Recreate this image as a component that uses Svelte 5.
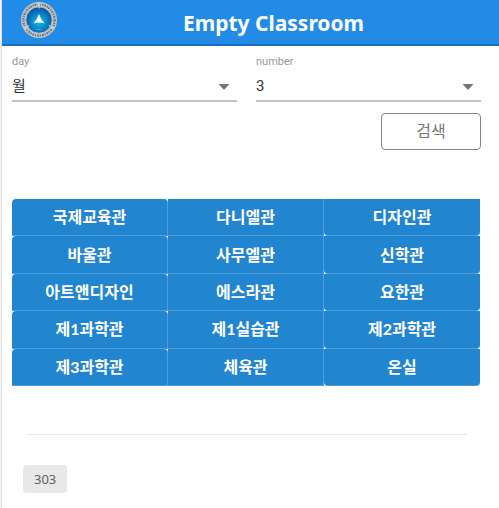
<script>
  let day = $state('월');
  let number = $state('3');
  const days = ['월', '화', '수', '목', '금'];
  const numbers = ['1', '2', '3', '4', '5', '6', '7', '8', '9'];
  const buildings = [
    '국제교육관', '다니엘관', '디자인관',
    '바울관', '사무엘관', '신학관',
    '아트앤디자인', '에스라관', '요한관',
    '제1과학관', '제1실습관', '제2과학관',
    '제3과학관', '체육관', '온실'
  ];
  const rooms = ['303'];
</script>

<div class="app">
  <header>
    <svg class="logo" viewBox="0 0 38 38" aria-hidden="true">
      <defs>
        <radialGradient id="core" cx="50%" cy="56%" r="52%">
          <stop offset="0" stop-color="#14bfe8" />
          <stop offset="0.4" stop-color="#0898d4" />
          <stop offset="1" stop-color="#0a55a4" />
        </radialGradient>
      </defs>
      <circle cx="19" cy="19" r="18" fill="#c4c6c4" />
      <circle cx="19" cy="19" r="15.6" fill="none" stroke="#5f7688" stroke-width="2.2" stroke-dasharray="1.7 1.1 1.2 0.9" />
      <circle cx="19" cy="19" r="13.2" fill="url(#core)" stroke="#c9ccca" stroke-width="0.8" />
      <path d="M17 1.5h4L19 8.5zM3.2 25.8l1.8 3.2 5-5.2zM34.8 25.8L33 29l-5-5.2z" fill="#c9ccca" />
      <path d="M19 13L21.2 18L24.6 22.6Q19 20.4 13.4 22.6L16.8 18z" fill="#fff" />
      <path d="M16.3 28.5h5.4" stroke="#79b8d8" stroke-width="1" stroke-dasharray="1 .4" />
    </svg>
    <h1>Empty Classroom</h1>
  </header>

  <main>
    <form onsubmit={(e) => e.preventDefault()}>
      <div class="fields">
        <div class="field">
          <label for="day">day</label>
          <div class="control">
            <select id="day" bind:value={day}>
              {#each days as d}<option value={d}>{d}</option>{/each}
            </select>
            <svg viewBox="0 0 12 6" aria-hidden="true"><path d="M0.5 0h11L6 6z" /></svg>
          </div>
        </div>
        <div class="field">
          <label for="number">number</label>
          <div class="control">
            <select id="number" bind:value={number}>
              {#each numbers as n}<option value={n}>{n}</option>{/each}
            </select>
            <svg viewBox="0 0 12 6" aria-hidden="true"><path d="M0.5 0h11L6 6z" /></svg>
          </div>
        </div>
      </div>
      <button class="search" type="submit">검색</button>
    </form>

    <div class="buildings">
      {#each buildings as name}
        <button type="button">{name}</button>
      {/each}
    </div>

    <hr />

    <div class="rooms">
      {#each rooms as room}
        <button type="button">{room}</button>
      {/each}
    </div>
  </main>
</div>

<style>
  .app {
    box-sizing: border-box;
    min-height: 100vh;
    border-left: 1px solid #f4f4f4;
    box-shadow: inset 1px 0 #dedede;
    padding-left: 1px;
    background: #fff;
    font-family: Roboto, "Noto Sans CJK KR", sans-serif;
  }
  header {
    box-sizing: border-box;
    display: flex;
    align-items: flex-start;
    height: 46px;
    padding: 1px 10px 0 18px;
    background: #228be6;
    border-bottom: 2px solid #1a6fc0;
  }
  .logo {
    flex: none;
    width: 38px;
    height: 38px;
  }
  h1 {
    flex: 1;
    margin: 0;
    padding-top: 6px;
    color: #fff;
    font: bold 21px/32px "Noto Sans", "Open Sans", sans-serif;
    text-align: center;
  }
  main {
    padding: 8px 18px 15px 10px;
  }
  form {
    display: flex;
    flex-direction: column;
  }
  .fields {
    display: flex;
    gap: 19px;
  }
  .field {
    flex: 1;
    min-width: 0;
  }
  label {
    display: block;
    color: #999;
    font-size: 11px;
    line-height: 16px;
  }
  .control {
    display: flex;
    align-items: center;
    height: 30px;
    border-bottom: 2px solid #c2c2c2;
    position: relative;
  }
  select {
    appearance: none;
    width: 100%;
    height: 30px;
    padding: 2px 0 0;
    border: 0;
    background: none;
    color: #333;
    font: 15px/28px Roboto, "Noto Sans CJK KR", sans-serif;
  }
  .control svg {
    position: absolute;
    top: 14px;
    right: 7px;
    width: 12px;
    height: 6px;
    fill: #757575;
    pointer-events: none;
  }
  .search {
    align-self: flex-end;
    width: 100px;
    height: 37px;
    margin-top: 11px;
    padding: 0 0 4px;
    border: 1px solid #858585;
    border-radius: 4px;
    background: #fff;
    color: #777;
    font: 16px/32px "Noto Sans CJK KR", sans-serif;
  }
  .buildings {
    display: grid;
    grid-template-columns: repeat(3, 1fr);
    grid-template-rows: repeat(5, 1fr);
    height: 187px;
    margin: 49px 1px 0 0;
  }
  .buildings button {
    min-width: 0;
    padding: 0;
    border: 0 solid #4a9fe0;
    border-width: 0 1px 1px 0;
    background: #2185d0;
    color: #fff;
    font: bold 16px/24px Lato, "Noto Sans CJK KR", sans-serif;
  }
  .buildings button:nth-child(3n + 1) {
    border-radius: 4px 4px 0 0;
  }
  .buildings button:nth-child(3n) {
    border-right: 0;
    border-radius: 0 0 4px 4px;
  }
  hr {
    height: 1px;
    margin: 48px 14px 30px;
    border: 0;
    background: #e6e6e6;
  }
  .rooms {
    display: flex;
    flex-wrap: wrap;
    gap: 8px;
    padding-left: 11px;
  }
  .rooms button {
    height: 28px;
    padding: 0 11px;
    border: 0;
    border-radius: 4px;
    background: #e8e8e8;
    color: #606060;
    font: 13px/28px "Noto Sans", "Open Sans", sans-serif;
  }
</style>
